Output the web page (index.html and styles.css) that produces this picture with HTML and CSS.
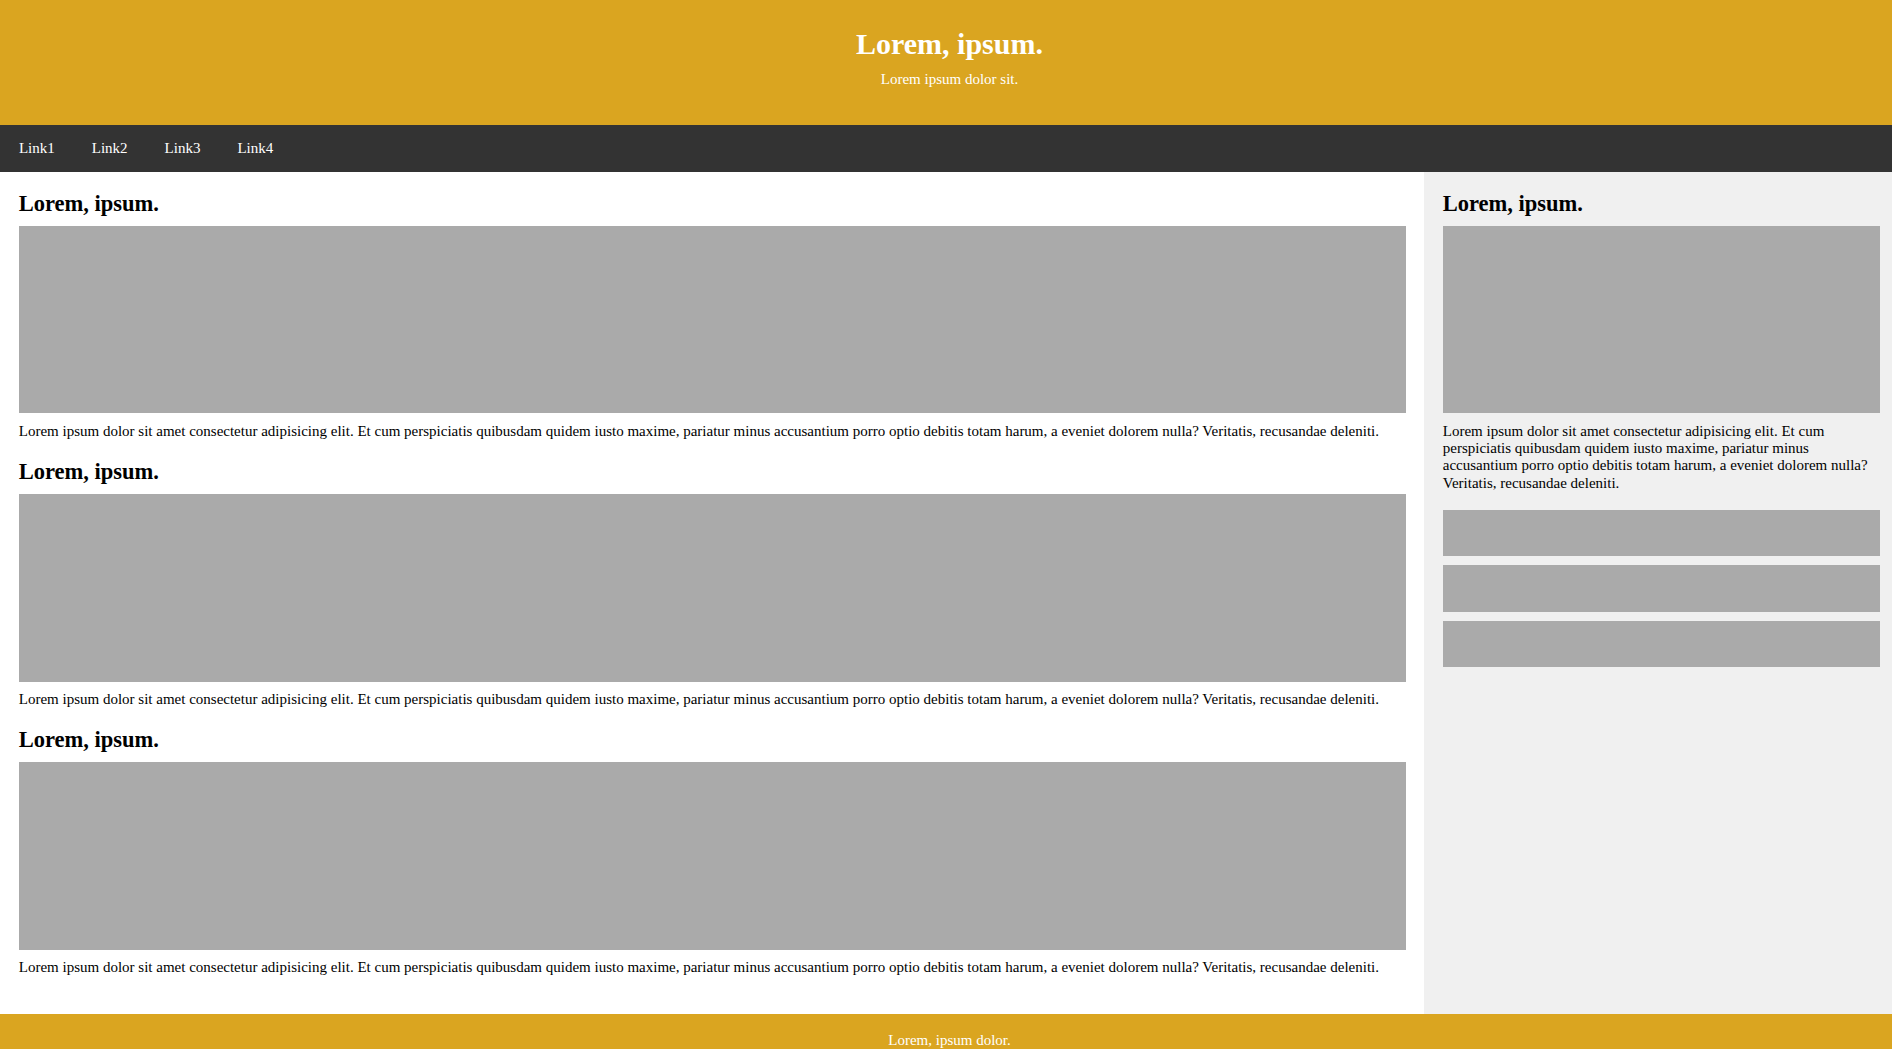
FILE: index.html
```html
<!DOCTYPE html>
<html lang="en">
<head>
<meta charset="utf-8">
<title>Lorem, ipsum.</title>
<link rel="stylesheet" href="styles.css">
</head>
<body>
<header class="site-header">
  <h1 class="site-title">Lorem, ipsum.</h1>
  <p class="site-sub">Lorem ipsum dolor sit.</p>
</header>
<nav class="site-nav">
  <a href="#" class="nav-link">Link1</a>
  <a href="#" class="nav-link">Link2</a>
  <a href="#" class="nav-link">Link3</a>
  <a href="#" class="nav-link">Link4</a>
</nav>
<div class="layout">
  <main class="main">
    <article class="post">
      <h2 class="post-title">Lorem, ipsum.</h2>
      <div class="ph ph-big"></div>
      <p class="post-text">Lorem ipsum dolor sit amet consectetur adipisicing elit. Et cum perspiciatis quibusdam quidem iusto maxime, pariatur minus accusantium porro optio debitis totam harum, a eveniet dolorem nulla? Veritatis, recusandae deleniti.</p>
    </article>
    <article class="post">
      <h2 class="post-title">Lorem, ipsum.</h2>
      <div class="ph ph-big"></div>
      <p class="post-text">Lorem ipsum dolor sit amet consectetur adipisicing elit. Et cum perspiciatis quibusdam quidem iusto maxime, pariatur minus accusantium porro optio debitis totam harum, a eveniet dolorem nulla? Veritatis, recusandae deleniti.</p>
    </article>
    <article class="post">
      <h2 class="post-title">Lorem, ipsum.</h2>
      <div class="ph ph-big"></div>
      <p class="post-text">Lorem ipsum dolor sit amet consectetur adipisicing elit. Et cum perspiciatis quibusdam quidem iusto maxime, pariatur minus accusantium porro optio debitis totam harum, a eveniet dolorem nulla? Veritatis, recusandae deleniti.</p>
    </article>
  </main>
  <aside class="sidebar">
    <article class="post">
      <h2 class="post-title">Lorem, ipsum.</h2>
      <div class="ph ph-big"></div>
      <p class="post-text">Lorem ipsum dolor sit amet consectetur adipisicing elit. Et cum perspiciatis quibusdam quidem iusto maxime, pariatur minus accusantium porro optio debitis totam harum, a eveniet dolorem nulla? Veritatis, recusandae deleniti.</p>
    </article>
    <div class="side-boxes">
      <div class="ph ph-small"></div>
      <div class="ph ph-small"></div>
      <div class="ph ph-small"></div>
    </div>
  </aside>
</div>
<footer class="site-footer">
  <p class="footer-text">Lorem, ipsum dolor.</p>
</footer>
</body>
</html>
```

FILE: styles.css
```css
html, body {
  margin: 0;
  padding: 0;
}
body {
  font-family: "Liberation Serif", "Times New Roman", serif;
  font-size: 15px;
  line-height: 1.15;
  color: #000;
  background: #fff;
}
.site-header {
  background: #daa520;
  color: #fff;
  text-align: center;
  padding: 27px 0 36.4px 7px;
}
.site-title {
  margin: 0 0 9.9px;
  font-size: 30px;
  font-weight: bold;
}
.site-sub {
  margin: 0;
  font-size: 15px;
}
.site-nav {
  background: #333;
  height: 46.875px;
  display: flex;
  align-items: center;
}
.nav-link {
  color: #fff;
  text-decoration: none;
  padding: 0 18.5px;
  font-size: 15px;
}
.nav-link:first-child {
  padding-left: 18.9px;
}
.layout {
  display: grid;
  grid-template-columns: 1fr 468px;
}
.main {
  padding: 18.75px 18.5px 18.75px 18.75px;
}
.sidebar {
  background: #f0f0f0;
  padding: 18.75px 12px 18.75px 18.75px;
}
.post {
  margin-bottom: 18.75px;
}
.post-title {
  margin: 0 0 9.375px;
  font-size: 22.5px;
  font-weight: bold;
}
.ph {
  background: #aaa;
}
.ph-big {
  height: 187.5px;
  margin-bottom: 9.375px;
}
.post-text {
  margin: 0;
}
.sidebar .post {
  margin-bottom: 18px;
}
.side-boxes {
  display: flex;
  flex-direction: column;
  gap: 9px;
}
.ph-small {
  height: 46.5px;
}
.site-footer {
  background: #daa520;
  color: #fff;
  text-align: center;
  padding: 17.75px 0 18.75px 7px;
}
.footer-text {
  margin: 0;
}
```
